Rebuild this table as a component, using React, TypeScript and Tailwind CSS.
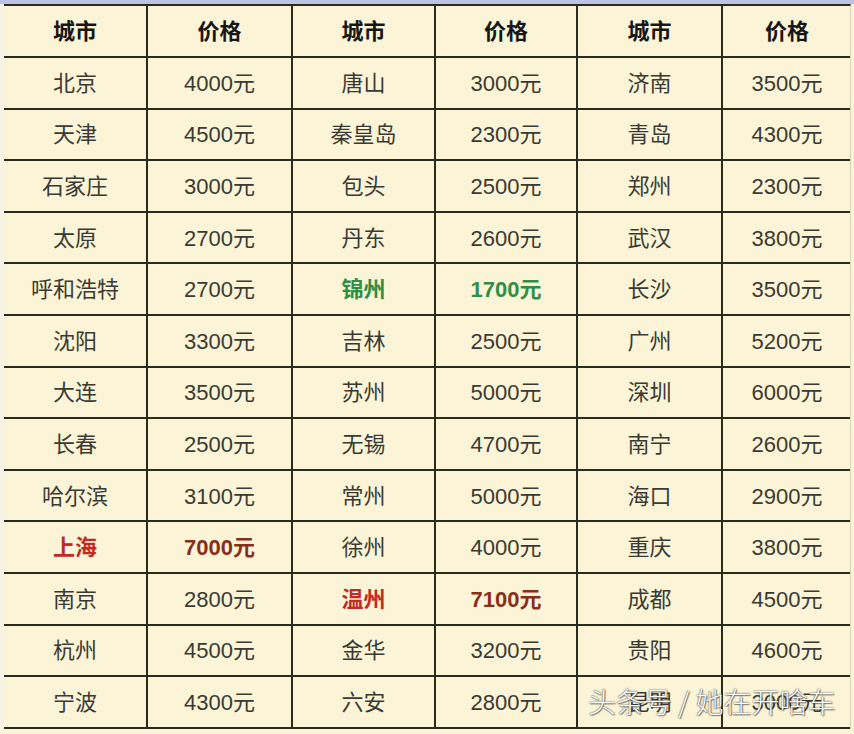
import React from "react";

type Cell = { t: string; c?: string };
type Row = [Cell, Cell, Cell, Cell, Cell, Cell];

const n = (t: string): Cell => ({ t });

const GREEN = "text-[#2f8f45] font-bold";
const RED = "text-[#c22a22] font-bold";
const BROWN = "text-[#8a2e1c] font-bold";

const rows: Row[] = [
  [n("北京"), n("4000元"), n("唐山"), n("3000元"), n("济南"), n("3500元")],
  [n("天津"), n("4500元"), n("秦皇岛"), n("2300元"), n("青岛"), n("4300元")],
  [n("石家庄"), n("3000元"), n("包头"), n("2500元"), n("郑州"), n("2300元")],
  [n("太原"), n("2700元"), n("丹东"), n("2600元"), n("武汉"), n("3800元")],
  [n("呼和浩特"), n("2700元"), { t: "锦州", c: GREEN }, { t: "1700元", c: GREEN }, n("长沙"), n("3500元")],
  [n("沈阳"), n("3300元"), n("吉林"), n("2500元"), n("广州"), n("5200元")],
  [n("大连"), n("3500元"), n("苏州"), n("5000元"), n("深圳"), n("6000元")],
  [n("长春"), n("2500元"), n("无锡"), n("4700元"), n("南宁"), n("2600元")],
  [n("哈尔滨"), n("3100元"), n("常州"), n("5000元"), n("海口"), n("2900元")],
  [{ t: "上海", c: RED }, { t: "7000元", c: BROWN }, n("徐州"), n("4000元"), n("重庆"), n("3800元")],
  [n("南京"), n("2800元"), { t: "温州", c: RED }, { t: "7100元", c: BROWN }, n("成都"), n("4500元")],
  [n("杭州"), n("4500元"), n("金华"), n("3200元"), n("贵阳"), n("4600元")],
  [n("宁波"), n("4300元"), n("六安"), n("2800元"), n("昆明"), n("3000元")],
];

const widths = ["w-[144px]", "w-[145px]", "w-[143px]", "w-[142px]", "w-[145px]", "w-[128px]"];

const FONT = { fontFamily: '"Liberation Sans", "Noto Sans CJK SC", sans-serif' };

function RowView({ cells, header }: { cells: Cell[]; header?: boolean }) {
  return (
    <div className={`flex border-b-2 border-[#2b2a1f] ${header ? "h-[52px]" : "h-[51.6px]"}`}>
      {cells.map((c, i) => {
        const color = c.c ? c.c : header ? "font-bold text-[#161616]" : "text-[#3a3a34]";
        return (
          <div
            key={i}
            className={`${widths[i]} shrink-0 flex items-center justify-center pt-[2px] ${
              i < 5 ? "border-r-2 border-[#2b2a1f]" : ""
            } ${color} text-[22px] leading-none`}
          >
            {c.t}
          </div>
        );
      })}
    </div>
  );
}

export default function App() {
  const header: Cell[] = [n("城市"), n("价格"), n("城市"), n("价格"), n("城市"), n("价格")];
  return (
    <div className="relative w-[854px] h-[734px] overflow-hidden bg-[#fbf4d6]" style={FONT}>
      <div className="h-[4px] bg-[#bcc4e2]" />
      <div className="flex">
        <div className="w-[4px] shrink-0 bg-[#f6f3e6]" />
        <div className="w-[847px] shrink-0 border-t-2 border-[#2b2a1f] border-r border-r-[#d6d2bd]">
          <RowView cells={header} header />
          {rows.map((r, i) => (
            <RowView key={i} cells={r} />
          ))}
        </div>
        <div className="flex-1 bg-[#fbf4d6]" />
      </div>
      <div
        className="absolute left-[588px] top-[687px] text-[28px] leading-none text-white whitespace-nowrap"
        style={{
          fontFamily: '"Noto Sans CJK SC", sans-serif',
          fontWeight: 300,
          textShadow:
            "0 0 1px rgba(60,60,60,0.9), 0 0 2px rgba(60,60,60,0.7), 1px 1px 1px rgba(80,80,80,0.6)",
        }}
      >
        头条号 / 她在开啥车
      </div>
    </div>
  );
}
